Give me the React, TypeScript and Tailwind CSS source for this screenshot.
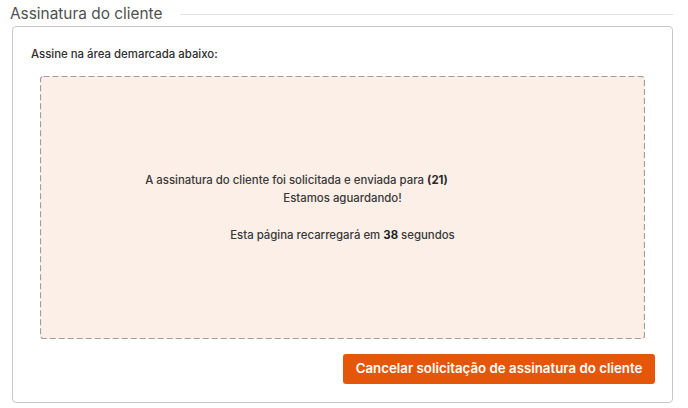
import React from 'react';

const App = () => {
    return (
        <div className="w-[688px] h-[408px] bg-white font-['Inter',sans-serif] pt-[4px]">
            <div className="flex items-center pl-[10px] pr-[15px]">
                <h2 className="text-[15.4px] leading-[20px] text-[#505050] font-normal">Assinatura do cliente</h2>
                <div className="flex-1 h-px bg-[#e2e2e2] ml-[18px] mt-[1px]" />
            </div>

            <div className="mx-[12px] mt-[2px] w-[661px] h-[377px] border border-[#c8c8c8] rounded-[4px] flex flex-col">
                <p className="pl-[18px] pt-[19px] text-[11.4px] leading-[16px] font-medium text-[#2e2e2e]">
                    Assine na área demarcada abaixo:
                </p>

                <div className="relative mx-[27px] mt-[14px] h-[263px] bg-[#fcefe8] rounded-[3px] flex flex-col items-center justify-center text-[11.4px] leading-[18px] font-medium text-[#383838]">
                    <svg className="absolute inset-0 w-full h-full" preserveAspectRatio="none">
                        <rect x="0.5" y="0.5" width="calc(100% - 1px)" height="calc(100% - 1px)" rx="3" fill="none" stroke="#9e9e9e" strokeWidth="1.2" strokeDasharray="6 3" />
                    </svg>
                    <p className="relative pr-[92px]">
                        A assinatura do cliente foi solicitada e enviada para <b className="font-bold text-[#2a2a2a]">(21)</b>
                    </p>
                    <p className="relative">Estamos aguardando!</p>
                    <p className="relative mt-[19px]">
                        Esta página recarregará em <b className="font-bold text-[#1f1f1f]">38</b> segundos
                    </p>
                </div>

                <div className="flex justify-end pr-[17px] mt-[15px]">
                    <button className="w-[312px] h-[30px] bg-[#e4570a] rounded-[3px] text-white text-[13.3px] font-semibold">
                        Cancelar solicitação de assinatura do cliente
                    </button>
                </div>
            </div>
        </div>
    );
};

export default App;
